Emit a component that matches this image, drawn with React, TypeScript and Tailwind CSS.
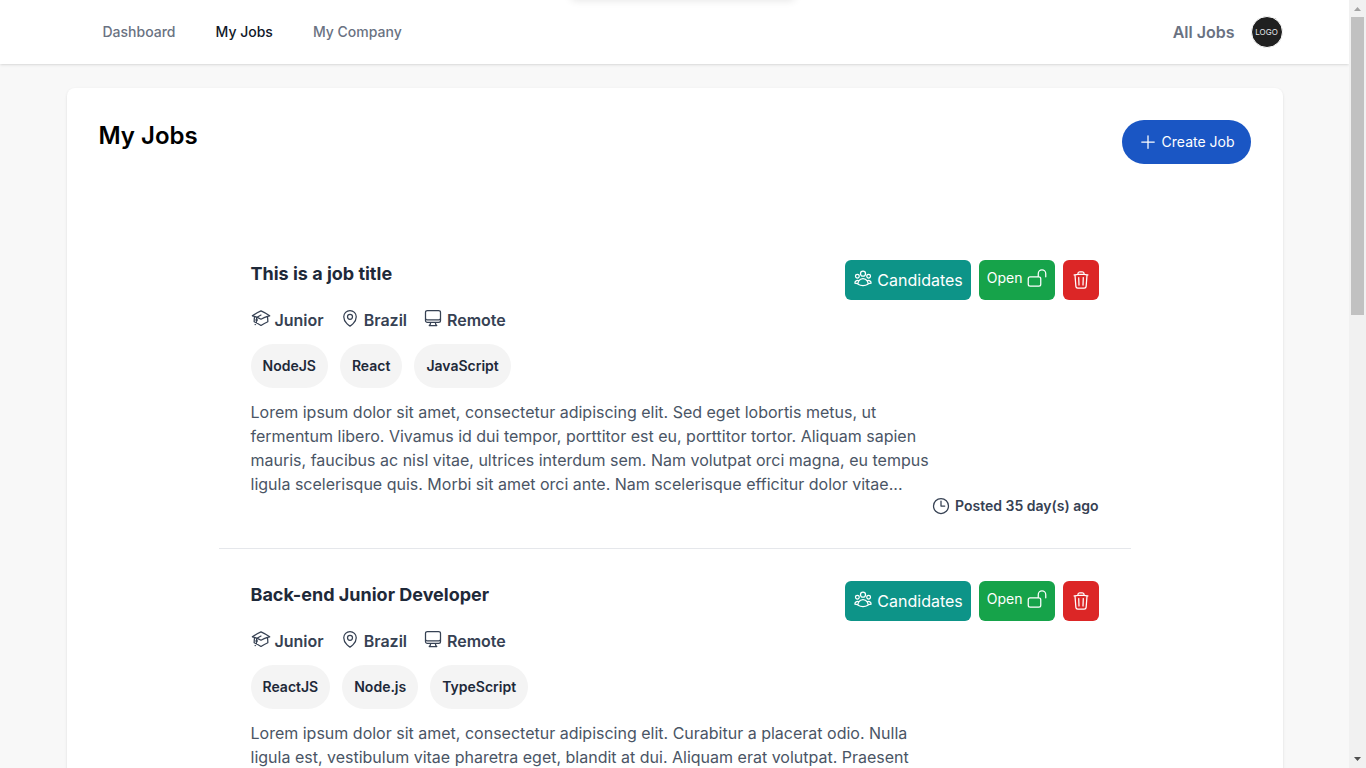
import {
  HiOutlineAcademicCap,
  HiOutlineClock,
  HiOutlineComputerDesktop,
  HiOutlineLockOpen,
  HiOutlineMapPin,
  HiOutlinePlus,
  HiOutlineTrash,
  HiOutlineUserGroup,
} from "react-icons/hi2";

type Job = {
  title: string;
  level: string;
  country: string;
  place: string;
  skills: string[];
  description: string;
  posted: string;
};

const jobs: Job[] = [
  {
    title: "This is a job title",
    level: "Junior",
    country: "Brazil",
    place: "Remote",
    skills: ["NodeJS", "React", "JavaScript"],
    description:
      "Lorem ipsum dolor sit amet, consectetur adipiscing elit. Sed eget lobortis metus, ut fermentum libero. Vivamus id dui tempor, porttitor est eu, porttitor tortor. Aliquam sapien mauris, faucibus ac nisl vitae, ultrices interdum sem. Nam volutpat orci magna, eu tempus ligula scelerisque quis. Morbi sit amet orci ante. Nam scelerisque efficitur dolor vitae...",
    posted: "Posted 35 day(s) ago",
  },
  {
    title: "Back-end Junior Developer",
    level: "Junior",
    country: "Brazil",
    place: "Remote",
    skills: ["ReactJS", "Node.js", "TypeScript"],
    description:
      "Lorem ipsum dolor sit amet, consectetur adipiscing elit. Curabitur a placerat odio. Nulla ligula est, vestibulum vitae pharetra eget, blandit at dui. Aliquam erat volutpat. Praesent",
    posted: "Posted 35 day(s) ago",
  },
];

function Header() {
  return (
    <header className="relative h-16 shrink-0 bg-white shadow">
      <div className="absolute -top-2 left-1/2 -ml-26 h-2 w-56 rounded-lg shadow-[0_0_8px_rgba(0,0,0,0.12)]" />
      <div className="mx-auto flex h-full max-w-7xl items-center justify-between px-8">
        <nav className="flex gap-10 pl-9 text-sm font-medium text-gray-500">
          <a href="#dashboard">Dashboard</a>
          <a href="#my-jobs" className="text-gray-900">My Jobs</a>
          <a href="#my-company">My Company</a>
        </nav>
        <div className="flex items-center gap-4">
          <a href="#all-jobs" className="font-semibold text-gray-500">All Jobs</a>
          <button
            aria-label="Account"
            className="flex size-8 items-center justify-center rounded-full border border-white bg-[#202020] text-[8px] text-gray-200"
          >
            LOGO
          </button>
        </div>
      </div>
    </header>
  );
}

function JobItem({ job }: { job: Job }) {
  return (
    <li className="border-b border-gray-200 p-8">
      <div className="flex h-9 items-start justify-between">
        <h2 className="text-lg font-bold text-gray-800">{job.title}</h2>
        <div className="flex gap-2 text-white">
          <button className="flex h-10 items-start gap-1 rounded-md bg-[#0d9488] px-2 py-2">
            <HiOutlineUserGroup className="size-5" />
            Candidates
          </button>
          <button className="flex h-10 items-start gap-1 rounded-md bg-[#16a34a] px-2 py-2 text-sm">
            Open
            <HiOutlineLockOpen className="size-5" />
          </button>
          <button aria-label="Delete job" className="flex h-10 items-center rounded-md bg-[#dc2626] px-2">
            <HiOutlineTrash className="size-5" />
          </button>
        </div>
      </div>
      <div className="mt-3 flex gap-4 font-semibold text-gray-700">
        <span className="flex items-start gap-1"><HiOutlineAcademicCap className="size-5" />{job.level}</span>
        <span className="flex items-start gap-1"><HiOutlineMapPin className="size-5" />{job.country}</span>
        <span className="flex items-start gap-1"><HiOutlineComputerDesktop className="size-5" />{job.place}</span>
      </div>
      <ul className="mt-3 flex gap-3 text-sm font-semibold text-gray-800">
        {job.skills.map((skill) => (
          <li key={skill} className="rounded-3xl bg-[#f4f4f4] p-3">{skill}</li>
        ))}
      </ul>
      <p className="mt-3 min-h-24 w-4/5 text-gray-600">{job.description}</p>
      <div className="flex items-center justify-end gap-1 text-sm font-semibold text-gray-700">
        <HiOutlineClock className="size-5" />
        {job.posted}
      </div>
    </li>
  );
}

function Scrollbar() {
  return (
    <div aria-hidden="true" className="flex w-[17px] shrink-0 flex-col items-center bg-[#f1f1f1]">
      <svg className="h-[17px] w-[17px] shrink-0" viewBox="0 0 17 17"><path d="M5 11h7L8.500 7z" fill="#a3a3a3" /></svg>
      <div className="h-[298px] w-[13px] bg-[#c1c1c1]" />
      <svg className="mt-auto h-[17px] w-[17px] shrink-0" viewBox="0 0 17 17"><path d="M5 6h7L8.500 10z" fill="#505050" /></svg>
    </div>
  );
}

export default function App() {
  return (
    <div className="flex h-screen overflow-hidden bg-[#f8f8f8] font-[Inter,sans-serif]">
      <div className="flex min-w-0 flex-1 flex-col overflow-hidden">
        <Header />
        <main className="mx-auto w-full max-w-7xl px-8 pt-6">
          <div className="rounded-lg bg-white py-8 shadow-sm">
            <div className="flex items-start justify-between px-8">
              <h1 className="text-2xl font-semibold text-black">My Jobs</h1>
              <button className="flex items-center gap-1 rounded-3xl bg-[#1a56c4] px-4 py-3 text-sm text-white">
                <HiOutlinePlus className="size-5" />
                Create Job
              </button>
            </div>
            <ul className="mx-auto mt-16 w-3/4">
              {jobs.map((job) => (
                <JobItem key={job.title} job={job} />
              ))}
            </ul>
          </div>
        </main>
      </div>
      <Scrollbar />
    </div>
  );
}
